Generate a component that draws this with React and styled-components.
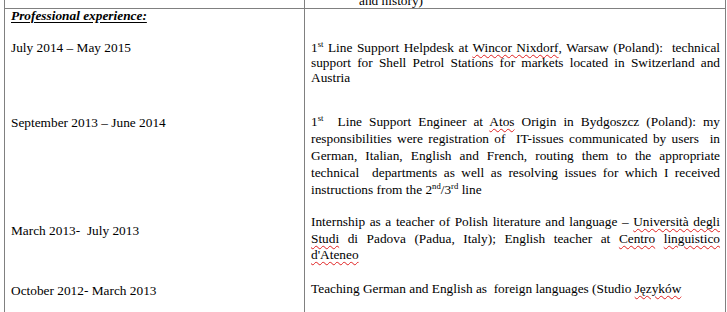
import React from "react";
import styled, { createGlobalStyle } from "styled-components";

const GlobalStyle = createGlobalStyle`
  html, body {
    margin: 0;
    padding: 0;
    background: #ffffff;
    overflow: hidden;
  }
  body {
    font-family: "Liberation Serif", "Times New Roman", serif;
    font-size: 13.33px;
    color: #000000;
  }
`;

const Table = styled.div`
  margin-left: 4px;
  width: 720px;
  height: 312px;
  display: flex;
  flex-direction: column;
  border-left: 1px solid #808080;
  border-right: 1px solid #808080;
`;

const Row = styled.div`
  display: grid;
  grid-template-columns: 300px 420px;
  flex: ${({ $top }) => ($top ? "0 0 8px" : "1 1 auto")};
  border-bottom: ${({ $top }) => ($top ? "1px solid #808080" : "none")};
`;

const Cell = styled.div`
  padding: 0 ${({ $right }) => ($right ? "5px" : "0")} 0 6px;
  border-right: ${({ $right }) => ($right ? "none" : "1px solid #808080")};
  min-width: 0;
`;

const TopLine = styled.div`
  line-height: 15px;
  margin-top: -7px;
  padding-left: 48px;
  white-space: nowrap;
`;

const Para = styled.div`
  margin-top: ${({ $mt }) => $mt}px;
  line-height: ${({ $lh }) => $lh || 15}px;
  white-space: nowrap;
`;

const Heading = styled(Para)`
  font-weight: bold;
  font-style: italic;
  text-decoration: underline;
  text-underline-offset: 2px;
`;

const Line = styled.div`
  text-align: ${({ $last }) => ($last ? "left" : "justify")};
  text-align-last: ${({ $last }) => ($last ? "left" : "justify")};
  white-space: normal;
`;

const Sup = styled.sup`
  font-size: 0.65em;
  line-height: 0;
  vertical-align: 0.55em;
`;

const Squiggle = styled.span`
  text-decoration-line: underline;
  text-decoration-style: wavy;
  text-decoration-color: #e02020;
  text-decoration-thickness: 1px;
  text-underline-offset: 2px;
`;

export default function App() {
  return (
    <>
      <GlobalStyle />
      <Table>
        <Row $top>
          <Cell />
          <Cell $right>
            <TopLine>and history)</TopLine>
          </Cell>
        </Row>

        <Row>
          <Cell>
            <Heading $mt={0} $lh={14}>Professional experience:</Heading>
            <Para $mt={16.5}>July 2014 – May 2015</Para>
            <Para $mt={60.8}>September 2013 – June 2014</Para>
            <Para $mt={92.7}>March 2013-&nbsp; July 2013</Para>
            <Para $mt={45}>October 2012- March 2013</Para>
          </Cell>

          <Cell $right>
            <Para $mt={30.7}>
              <Line>
                1<Sup>st</Sup> Line Support Helpdesk at <Squiggle>Wincor Nixdorf</Squiggle>, Warsaw (Poland):&nbsp; technical
              </Line>
              <Line>support for Shell Petrol Stations for markets located in Switzerland and</Line>
              <Line $last>Austria</Line>
            </Para>

            <Para $mt={28.6} $lh={17}>
              <Line>
                1<Sup>st</Sup>&nbsp; Line Support Engineer at <Squiggle>Atos</Squiggle> Origin in Bydgoszcz (Poland): my
              </Line>
              <Line>responsibilities were registration of&nbsp; IT-issues communicated by users&nbsp; in</Line>
              <Line>German, Italian, English and French, routing them to the appropriate</Line>
              <Line>technical&nbsp; departments as well as resolving issues for which I received</Line>
              <Line $last>
                instructions from the 2<Sup>nd</Sup>/3<Sup>rd</Sup> line
              </Line>
            </Para>

            <Para $mt={16.2} $lh={16.5}>
              <Line>
                Internship as a teacher of Polish literature and language – <Squiggle>Università degli</Squiggle>
              </Line>
              <Line>
                <Squiggle>Studi</Squiggle> di Padova (Padua, Italy); English teacher at <Squiggle>Centro</Squiggle>{" "}
                <Squiggle>linguistico</Squiggle>
              </Line>
              <Line $last>
                <Squiggle>d'Ateneo</Squiggle>
              </Line>
            </Para>

            <Para $mt={17.3}>
              <Line $last>
                Teaching German and English as&nbsp; foreign languages (Studio <Squiggle>Języków</Squiggle>
              </Line>
            </Para>
          </Cell>
        </Row>
      </Table>
    </>
  );
}
